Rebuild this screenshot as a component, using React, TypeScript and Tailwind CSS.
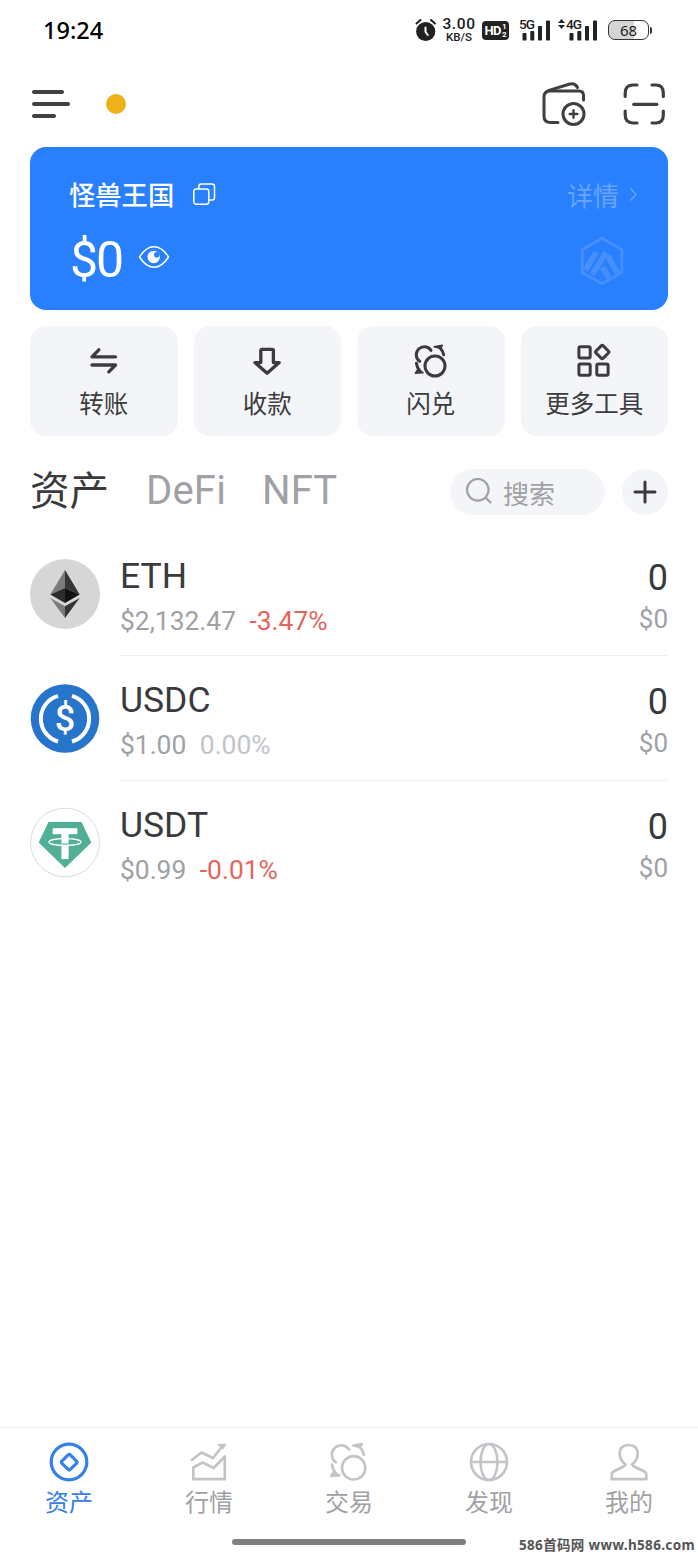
import type {ReactNode} from 'react'

type Token = {
  symbol: string
  price: string
  change: string
  changeClass: string
  icon: ReactNode
}

function AlarmIcon() {
  return (
    <svg width="22" height="24" viewBox="0 0 22 24" fill="none">
      <circle cx="10.7" cy="13.5" r="9.6" fill="#222"/>
      <path d="M1.5 5.5L5.5 2M20 5.5L16 2" stroke="#222" strokeWidth="2" strokeLinecap="round"/>
      <path d="M10.5 9.5V14L12.8 17" stroke="#fff" strokeWidth="2" strokeLinecap="round"/>
    </svg>
  )
}

function SignalBars() {
  return (
    <svg width="29" height="21" viewBox="0 0 29 21" fill="#222">
      <rect x="0.5" y="13" width="4" height="7.5" rx="0.8"/>
      <rect x="8.3" y="11" width="4" height="9.5" rx="0.8"/>
      <rect x="16" y="6" width="4" height="14.5" rx="0.8"/>
      <rect x="24" y="0.5" width="4" height="20" rx="0.8"/>
    </svg>
  )
}

function WalletIcon() {
  return (
    <svg width="48" height="48" viewBox="0 0 48 48" fill="none" stroke="#3f3f42" strokeWidth="3" strokeLinecap="round">
      <path d="M43.5 20V15.5Q43.5 11 39 11H10Q4 11 4 17V36Q4 42.5 10.5 42.5H18"/>
      <path d="M6 12.5Q7 11 9 10.4L29 4.3Q35 2.5 37.5 7.5"/>
      <circle cx="33.5" cy="34" r="10.5"/>
      <path d="M29.7 34H37.3M33.5 30.2V37.8" strokeWidth="2.4"/>
    </svg>
  )
}

function ScanIcon() {
  return (
    <svg width="44" height="44" viewBox="0 0 44 44" fill="none" stroke="#3f3f42" strokeWidth="3.2" strokeLinecap="round">
      <path d="M3.2 14.5V11Q3.2 3 11 3H15M30 3H34Q41.3 3 41.3 11V14.5M41.3 29V33Q41.3 41 34 41H30M15 41H11Q3.2 41 3.2 33V29"/>
      <path d="M11.7 22.3H34.8"/>
    </svg>
  )
}

function CopyIcon() {
  return (
    <svg width="24" height="24" viewBox="0 0 24 24" fill="none" stroke="#fff" strokeWidth="1.5">
      <rect x="1.8" y="7" width="15" height="15.2" rx="2.5"/>
      <path d="M6.8 7V4.5Q6.8 2 9.3 2H20Q22.5 2 22.5 4.5V15.5Q22.5 18 20 18H16.8"/>
    </svg>
  )
}

function EyeIcon() {
  return (
    <svg width="32" height="24" viewBox="0 0 32 24" fill="none">
      <path d="M1.5 12Q8 1.8 16 1.8T30.5 12Q24 22.2 16 22.2T1.5 12Z" stroke="#fff" strokeWidth="1.5" strokeLinejoin="round"/>
      <circle cx="15.7" cy="12" r="6.2" fill="#fff"/>
      <circle cx="18.8" cy="9.8" r="2.8" fill="#2980fe"/>
    </svg>
  )
}

function ArbitrumIcon() {
  return (
    <svg width="46" height="50" viewBox="0 0 46 50" fill="none" stroke="#4690fe">
      <path d="M23 2.2L42.8 13.6V36.4L23 47.8L3.2 36.4V13.6Z" strokeWidth="2.8"/>
      <g strokeWidth="5.6">
        <path d="M6.5 34L17.5 16"/>
        <path d="M13.5 38.5L27 16.5"/>
        <path d="M23.5 31L30 42"/>
        <path d="M28.5 19.5L38.5 37"/>
      </g>
    </svg>
  )
}

function TransferIcon() {
  return (
    <svg width="32" height="30" viewBox="0 0 32 30" fill="none" stroke="#3c3c3e" strokeWidth="3.3" strokeLinecap="round" strokeLinejoin="round">
      <path d="M10.8 3.8L4 10.8H27.5M4 19H27.5L20.8 25.8"/>
    </svg>
  )
}

function ReceiveIcon() {
  return (
    <svg width="32" height="30" viewBox="0 0 32 30" fill="none" stroke="#3c3c3e" strokeWidth="3.3" strokeLinejoin="round">
      <path d="M9.8 4.6Q9.8 3.4 11 3.4H21.2Q22.4 3.4 22.4 4.6V16.6H28.2L16.1 27.2L4 16.6H9.8Z"/>
    </svg>
  )
}

function SwapIcon({size = 36, stroke = 3}: { size?: number; stroke?: number }) {
  return (
    <svg width={size} height={size} viewBox="0 0 36 36" fill="none" stroke="currentColor" strokeWidth={stroke} strokeLinecap="round" strokeLinejoin="round">
      <circle cx="22" cy="23" r="10"/>
      <path d="M6.7 18.3A8 8 0 1 1 18 7.4"/>
      <path d="M26.8 4.6Q29.8 7.5 30.7 11.8M3.4 20.2Q4 25 7.2 28.4"/>
      <path d="M21.2 3.8L29.3 2.3L27.5 5.6ZM2.4 30.2L10 29.6L4.8 26.4Z" fill="currentColor" strokeWidth="1.6"/>
    </svg>
  )
}

function ToolsIcon() {
  return (
    <svg width="36" height="36" viewBox="0.8 1 36 36" fill="none" stroke="#3c3c3e" strokeWidth="3" strokeLinejoin="round">
      <rect x="3.7" y="4.7" width="11.3" height="11.3" rx="1.5"/>
      <rect x="3.7" y="22" width="11.3" height="11.3" rx="1.5"/>
      <rect x="21.6" y="22" width="11.3" height="11.3" rx="1.5"/>
      <rect x="21.9" y="4.9" width="10.2" height="10.2" rx="1.5" transform="rotate(45 27 10)"/>
    </svg>
  )
}

function SearchIcon() {
  return (
    <svg width="28" height="28" viewBox="0 1 28 28" fill="none" stroke="#a0a1a5" strokeWidth="2.2" strokeLinecap="round">
      <circle cx="12.8" cy="12.8" r="10.8"/>
      <path d="M20.6 20.6L25.5 25.5"/>
    </svg>
  )
}

function EthLogo() {
  return (
    <svg width="70" height="70" viewBox="0 0 70 70">
      <circle cx="35" cy="35" r="35" fill="#d6d6d6"/>
      <path d="M35 11L20.3 35.5L35 29Z" fill="#7b7b7b"/>
      <path d="M35 11L49.7 35.5L35 29Z" fill="#353535"/>
      <path d="M20.3 35.5L35 29V44Z" fill="#2b2b2b"/>
      <path d="M49.7 35.5L35 29V44Z" fill="#111"/>
      <path d="M20.3 39L35 47.2V59Z" fill="#7b7b7b"/>
      <path d="M49.7 39L35 47.2V59Z" fill="#353535"/>
    </svg>
  )
}

function UsdcLogo() {
  return (
    <svg width="70" height="70" viewBox="0 0.5 70 70">
      <circle cx="35" cy="35" r="34.3" fill="#2775ca"/>
      <path d="M28 12.3A23.8 23.8 0 0 0 28 58M42 12.3A23.8 23.8 0 0 1 42 58" fill="none" stroke="#fff" strokeWidth="4"/>
      <text x="35" y="47.5" textAnchor="middle" fill="#fff" className="font-['Roboto',sans-serif] text-[36px] font-medium">$</text>
    </svg>
  )
}

function UsdtLogo() {
  return (
    <svg width="70" height="70" viewBox="0 0.5 70 70" fill="none">
      <circle cx="35" cy="35" r="34.4" fill="#fff" stroke="#d9dcdf" strokeWidth="1"/>
      <path d="M18.5 14.5H51.5L61.3 35L35 60.5L8.7 35Z" fill="#50af95"/>
      <rect x="22.7" y="20.7" width="24.6" height="6" fill="#fff"/>
      <rect x="31.4" y="21" width="7.2" height="30.6" fill="#fff"/>
      <ellipse cx="35" cy="34.5" rx="16" ry="3.4" stroke="#fff" strokeWidth="1.3"/>
      <path d="M31.4 36.4Q35 36.9 38.6 36.4" stroke="#50af95" strokeWidth="1"/>
    </svg>
  )
}

function AssetsIcon() {
  return (
    <svg width="42" height="42" viewBox="0 0 42 42" fill="none" stroke="currentColor" strokeWidth="3.2">
      <circle cx="21" cy="21" r="17.8"/>
      <rect x="15.3" y="15.3" width="11.8" height="11.8" rx="1.5" transform="rotate(45 21.2 21.2)"/>
    </svg>
  )
}

function MarketIcon() {
  return (
    <svg width="42" height="42" viewBox="0 0 42 42" fill="none" stroke="currentColor" strokeWidth="2.7" strokeLinejoin="round">
      <path d="M3.2 19.5L13.5 11.5L25 17L34 5.5"/>
      <path d="M28.8 3L39 2.8L35 8.5Z" fill="currentColor" stroke="none"/>
      <path d="M5.3 38.2V26.5L14.5 21.5L25.7 27L36.8 15.5V38.2Z"/>
    </svg>
  )
}

function GlobeIcon() {
  return (
    <svg width="42" height="42" viewBox="0 0 42 42" fill="none" stroke="currentColor" strokeWidth="2.6">
      <circle cx="21" cy="21" r="18"/>
      <ellipse cx="21" cy="21" rx="8.5" ry="18"/>
      <path d="M3 21H39"/>
    </svg>
  )
}

function ProfileIcon() {
  return (
    <svg width="42" height="42" viewBox="0 0 42 42" fill="none" stroke="currentColor" strokeWidth="2.7" strokeLinejoin="round">
      <path d="M17.5 23.5Q11.7 19 11.7 13Q11.7 4 20.7 4T29.7 13Q29.7 19 24 23.5Q25 25.3 28 26.5L36.5 30.5Q38.3 31.5 38.3 33.5V38.2H3.7V33.5Q3.7 31.5 5.5 30.5L13.5 26.5Q16.5 25.3 17.5 23.5Z"/>
    </svg>
  )
}

const TOKENS: Token[] = [
  {symbol: 'ETH', price: '$2,132.47', change: '-3.47%', changeClass: 'text-[#e4655b]', icon: <EthLogo/>},
  {symbol: 'USDC', price: '$1.00', change: '0.00%', changeClass: 'text-[#c2c4c9]', icon: <UsdcLogo/>},
  {symbol: 'USDT', price: '$0.99', change: '-0.01%', changeClass: 'text-[#e4655b]', icon: <UsdtLogo/>},
]

const ACTIONS = [
  {label: '转账', icon: <TransferIcon/>},
  {label: '收款', icon: <ReceiveIcon/>},
  {label: '闪兑', icon: <SwapIcon/>},
  {label: '更多工具', icon: <ToolsIcon/>},
]

const NAV = [
  {label: '资产', icon: <AssetsIcon/>, active: true},
  {label: '行情', icon: <MarketIcon/>, active: false},
  {label: '交易', icon: <SwapIcon size={42} stroke={2.3}/>, active: false},
  {label: '发现', icon: <GlobeIcon/>, active: false},
  {label: '我的', icon: <ProfileIcon/>, active: false},
]

function StatusBar() {
  return (
    <div className="flex h-[60px] flex-none items-center pl-[43px] font-['Roboto',sans-serif] text-[#1c1c1c]">
      <div className="flex-1 pt-0.5 font-['Noto_Sans',sans-serif] text-[23.5px] font-medium leading-none text-black">19:24</div>
      <AlarmIcon/>
      <div className="ml-[5px] flex w-[34px] flex-col items-center font-medium">
        <span className="text-[15.5px] leading-[13px] tracking-[0.6px]">3.00</span>
        <span className="text-[11.5px] leading-[12px]">KB/S</span>
      </div>
      <div className="ml-1.5 mt-px flex h-[19px] w-[27px] items-center justify-center gap-px rounded-[4px] bg-[#222] text-white">
        <span className="text-[13px] font-bold leading-none tracking-[-0.5px]">HD</span>
        <span className="flex flex-col text-[8px] font-bold leading-[8px]">
          <span>1</span>
          <span>2</span>
        </span>
      </div>
      <div className="relative ml-[13px]">
        <SignalBars/>
        <span className="absolute -left-[3px] -top-[2px] bg-white pr-px text-[13.5px] font-medium leading-[12px] tracking-[-0.8px]">5G</span>
      </div>
      <div className="relative ml-[18px]">
        <SignalBars/>
        <span className="absolute -left-[3px] -top-[2px] bg-white pr-px text-[13.5px] font-medium leading-[12px] tracking-[-0.8px]">4G</span>
        <svg className="absolute -left-[11px] -top-px" width="7" height="10" viewBox="0 0 7 10" fill="#222">
          <path d="M0 4L3.5 0L7 4ZM0 6L3.5 10L7 6Z"/>
        </svg>
      </div>
      <div className="ml-2.5 flex h-5 w-[41px] items-center justify-center rounded-[7px] border-[1.5px] border-[#333] bg-gradient-to-r from-[#d4d4d4] from-65% to-white to-65% font-['Noto_Sans',sans-serif] text-[15px] leading-none">
        68
      </div>
      <div className="ml-px mr-[46px] h-[7px] w-[2px] rounded-r bg-[#333]"/>
    </div>
  )
}

function Header() {
  return (
    <header className="flex h-[87px] flex-none items-center pl-8 pr-8">
      <div className="flex flex-col gap-2">
        <div className="h-1 w-8 rounded-full bg-[#404042]"/>
        <div className="h-1 w-[38px] rounded-full bg-[#404042]"/>
        <div className="h-1 w-6 rounded-full bg-[#404042]"/>
      </div>
      <div className="ml-[35.5px] h-5 w-5 rounded-full bg-[#efb01a]"/>
      <div className="flex-1"/>
      <WalletIcon/>
      <div className="ml-[34px]">
        <ScanIcon/>
      </div>
    </header>
  )
}

function BalanceCard() {
  return (
    <section className="flex h-[163px] flex-none flex-col rounded-2xl bg-[#2980fe] pl-10 pr-[30px] pt-7 text-white">
      <div className="flex h-10 items-center">
        <span className="-ml-px pt-[3px] text-[26.3px] font-medium leading-none">怪兽王国</span>
        <span className="-mt-0.5 ml-[18px]">
          <CopyIcon/>
        </span>
        <span className="flex-1"/>
        <span className="pt-1 text-[26px] leading-none text-[#66a4fe]">详情</span>
        <svg className="-mt-0.5 ml-2.5" width="9" height="15" viewBox="0 0 9 15" fill="none" stroke="#66a4fe" strokeWidth="1.5">
          <path d="M1.5 1.5L7 7.5L1.5 13.5"/>
        </svg>
      </div>
      <div className="flex h-[90px] items-start">
        <span className="pt-5 text-[50px] leading-[50px] tracking-[-2px]">$0</span>
        <span className="ml-4 pt-[30px]">
          <EyeIcon/>
        </span>
        <span className="flex-1"/>
        <span className="mr-[13px] pt-[21px]">
          <ArbitrumIcon/>
        </span>
      </div>
    </section>
  )
}

function TokenRow({token, last}: { token: Token; last: boolean }) {
  return (
    <div className="flex h-[124.4px] items-center gap-5">
      {token.icon}
      <div className={`flex h-full flex-1 justify-between border-b ${last ? 'border-transparent' : 'border-[#efeff1]'}`}>
        <div className="pt-[22px]">
          <div className="text-[35.5px] leading-[44px] text-[#3a3a3c]">{token.symbol}</div>
          <div className="flex gap-[13.5px] text-[26.4px] leading-[46px] text-[#a0a1a5]">
            <span>{token.price}</span>
            <span className={token.changeClass}>{token.change}</span>
          </div>
        </div>
        <div className="pt-6 text-right">
          <div className="text-[36px] leading-[44px] text-[#3a3a3c]">0</div>
          <div className="text-[26px] leading-[38px] text-[#a0a1a5]">$0</div>
        </div>
      </div>
    </div>
  )
}

export default function App() {
  return (
    <div className="relative flex h-[1558px] w-[698px] flex-col overflow-hidden bg-white font-['Roboto','Noto_Sans_CJK_SC',sans-serif]">
      <StatusBar/>
      <Header/>

      <main className="flex flex-1 flex-col px-[30px]">
        <BalanceCard/>

        <div className="mt-4 grid flex-none grid-cols-4 gap-4">
          {ACTIONS.map((a) => (
            <button key={a.label} className="flex h-[110px] flex-col items-center rounded-2xl bg-[#f4f5f8] pt-[17px] text-[#3c3c3e]">
              <span className="flex h-9 items-center">{a.icon}</span>
              <span className="mt-2 text-[24.5px] leading-9">{a.label}</span>
            </button>
          ))}
        </div>

        <div className="flex h-24 flex-none items-center pt-4">
          <span className="text-[39.5px] leading-none text-[#3a3a3c]">资产</span>
          <span className="-mt-0.5 ml-[37px] text-[40px] leading-none tracking-[0.2px] text-[#a0a1a5]">DeFi</span>
          <span className="-mt-0.5 ml-[36px] text-[40px] leading-none text-[#a0a1a5]">NFT</span>
          <div className="flex-1"/>
          <div className="flex h-[46px] w-[155px] items-center gap-2.5 rounded-full bg-[#f4f5f8] pl-[15px] text-[26px] leading-none text-[#a0a1a5]">
            <SearchIcon/>
            <span className="pt-1.5">搜索</span>
          </div>
          <button className="ml-[17px] flex h-[46px] w-[46px] items-center justify-center rounded-full bg-[#f4f5f8]">
            <svg width="24" height="24" viewBox="0 0 24 24" stroke="#3a3a3c" strokeWidth="3" strokeLinecap="round">
              <path d="M2 12H22M12 2V22"/>
            </svg>
          </button>
        </div>

        <div>
          {TOKENS.map((t, i) => (
            <TokenRow key={t.symbol} token={t} last={i === TOKENS.length - 1}/>
          ))}
        </div>
      </main>

      <nav className="flex h-[131px] flex-none flex-col border-t border-[#ededef]">
        <div className="-mx-px grid grid-cols-5 pt-[13px]">
          {NAV.map((n) => (
            <div key={n.label} className={`flex flex-col items-center ${n.active ? 'text-[#3580ea]' : 'text-[#c2c4c8]'}`}>
              {n.icon}
              <span className={`mt-0.5 text-[24px] leading-9 ${n.active ? '' : 'text-[#a0a1a5]'}`}>{n.label}</span>
            </div>
          ))}
        </div>
        <div className="mx-auto mt-[18px] h-1.5 w-[234px] rounded-full bg-[#808080]"/>
      </nav>

      <div className="absolute bottom-[5px] right-[3px] whitespace-nowrap font-['Noto_Sans','Noto_Sans_CJK_SC',sans-serif] text-[13.5px] font-bold leading-4 tracking-[0.35px] text-[#555]">
        586首码网 www.h586.com
      </div>
    </div>
  )
}
